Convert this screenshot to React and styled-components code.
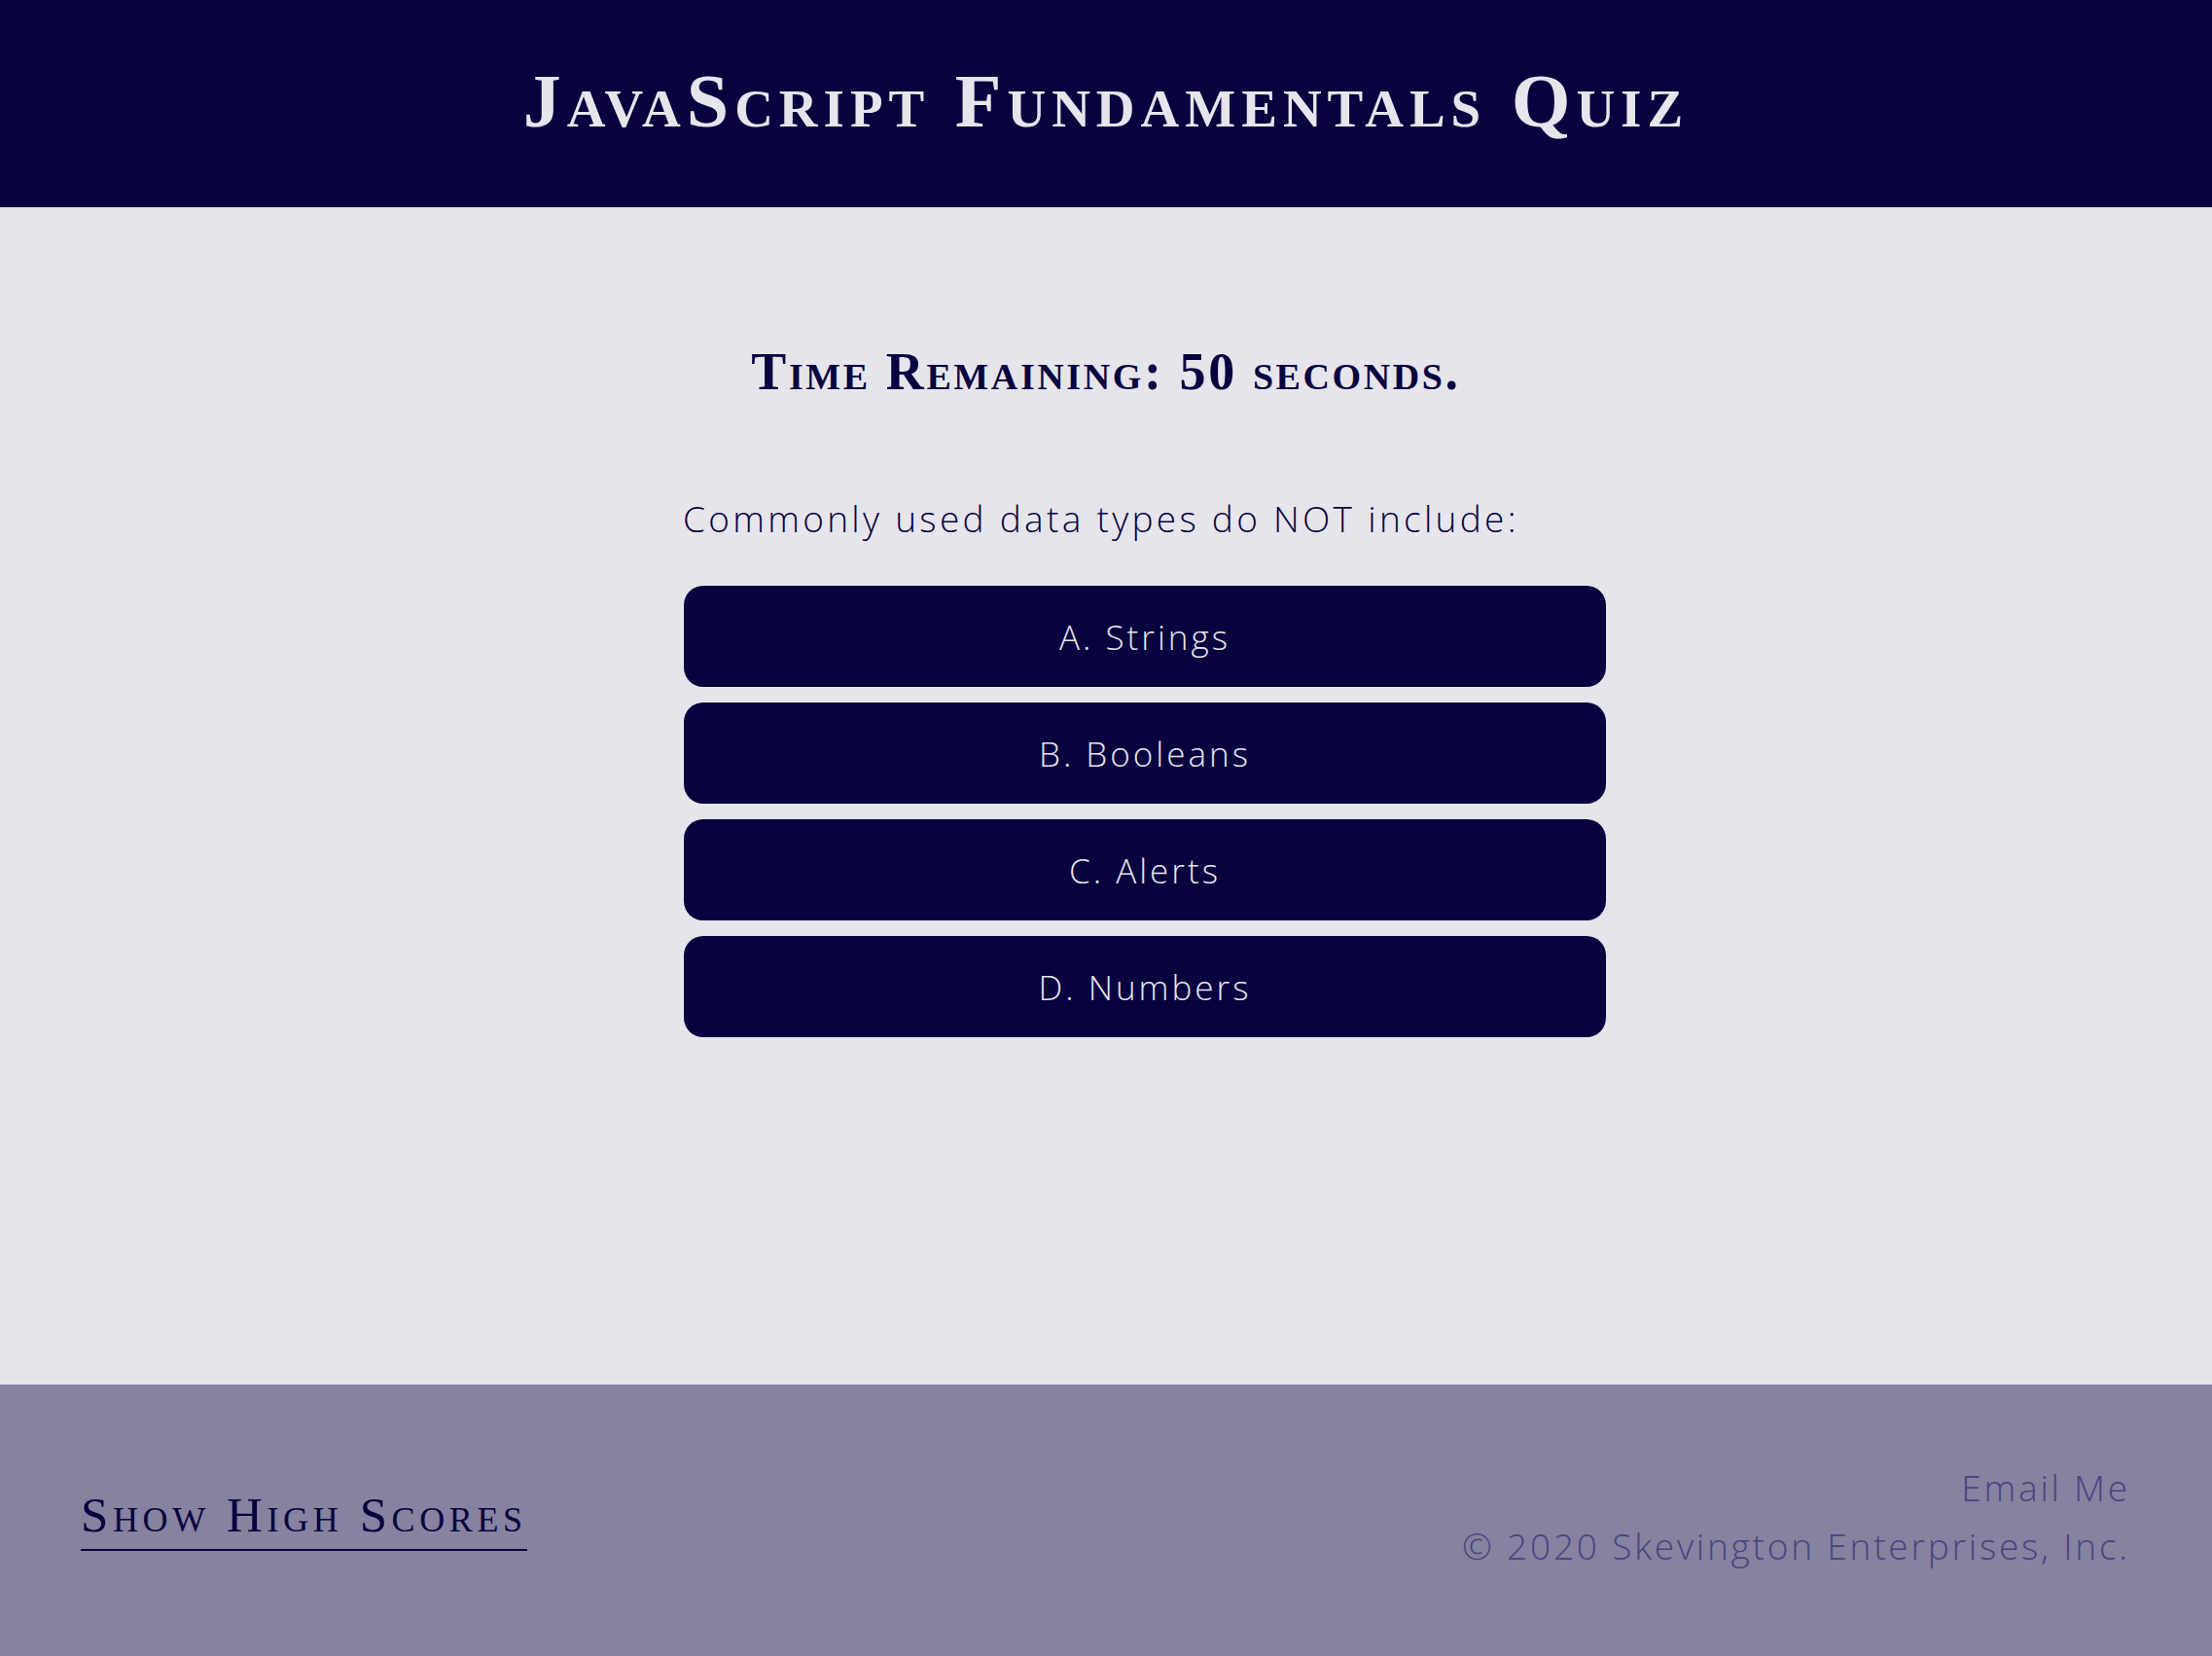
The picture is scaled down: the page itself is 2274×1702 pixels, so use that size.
import React from 'react';
import styled, { createGlobalStyle } from 'styled-components';

const GlobalStyle = createGlobalStyle`
	html, body {
		margin: 0;
		padding: 0;
	}

	body {
		background: #e6e5eb;
		font-family: 'Open Sans', 'Liberation Sans', sans-serif;
	}
`;

const StyledPage = styled.div`
	display: flex;
	flex-direction: column;
	min-height: 100vh;
`;

const StyledHeader = styled.header`
	display: flex;
	align-items: center;
	justify-content: center;
	height: 213px;
	background: #08023f;
`;

const StyledTitle = styled.h1`
	margin: 0 0 6px;
	font-family: 'Liberation Serif', 'DejaVu Serif', serif;
	font-variant: small-caps;
	font-weight: 700;
	font-size: 78px;
	letter-spacing: 6px;
	line-height: 1;
	color: #e6e5eb;
`;

const StyledMain = styled.main`
	flex: 1;
	display: flex;
	flex-direction: column;
	align-items: center;
	padding-top: 142px;
`;

const StyledTimer = styled.h2`
	margin: 0 0 105px;
	font-family: 'Liberation Serif', 'DejaVu Serif', serif;
	font-variant: small-caps;
	font-weight: 700;
	font-size: 54px;
	letter-spacing: 2.6px;
	line-height: 1;
	color: #08023f;
`;

const StyledQuiz = styled.section`
	width: 870px;
`;

const StyledQuestion = styled.p`
	margin: 0 0 51px;
	font-size: 37px;
	font-weight: 300;
	letter-spacing: 3.3px;
	line-height: 1;
	color: #08023f;
`;

const StyledChoices = styled.div`
	display: flex;
	flex-direction: column;
	gap: 16px;
`;

const StyledChoice = styled.button`
	box-sizing: content-box;
	width: 100%;
	height: 104px;
	padding: 0 39px;
	margin-left: 1px;
	border: none;
	border-radius: 20px;
	background: #08023f;
	color: #e6e5eb;
	font-family: 'Open Sans', 'Liberation Sans', sans-serif;
	font-size: 35px;
	font-weight: 300;
	letter-spacing: 3px;
	cursor: pointer;
`;

const StyledFooter = styled.footer`
	display: flex;
	align-items: center;
	justify-content: space-between;
	height: 279px;
	padding: 0 84px 0 83px;
	background: #86829f;
`;

const StyledScoresLink = styled.a`
	display: inline-block;
	padding-bottom: 9px;
	border-bottom: 2px solid #08023f;
	font-family: 'Liberation Serif', 'DejaVu Serif', serif;
	font-variant: small-caps;
	font-size: 51px;
	letter-spacing: 4.6px;
	line-height: 1;
	color: #08023f;
	text-decoration: none;
`;

const StyledContact = styled.div`
	text-align: right;
	font-size: 37px;
	font-weight: 300;
	letter-spacing: 2.8px;
	line-height: 60px;
	color: #4a4580;
	margin-top: -8px;
`;

const choices = ['A. Strings', 'B. Booleans', 'C. Alerts', 'D. Numbers'];

export default function App() {
	return (
		<StyledPage>
			<GlobalStyle />
			<StyledHeader>
				<StyledTitle>JavaScript Fundamentals Quiz</StyledTitle>
			</StyledHeader>
			<StyledMain>
				<StyledTimer>Time Remaining: 50 seconds.</StyledTimer>
				<StyledQuiz>
					<StyledQuestion>Commonly used data types do NOT include:</StyledQuestion>
					<StyledChoices>
						{choices.map((choice, index) => (
							<StyledChoice key={`${index}-choice`}>{choice}</StyledChoice>
						))}
					</StyledChoices>
				</StyledQuiz>
			</StyledMain>
			<StyledFooter>
				<StyledScoresLink href="#">Show High Scores</StyledScoresLink>
				<StyledContact>
					<div>Email Me</div>
					<div>© 2020 Skevington Enterprises, Inc.</div>
				</StyledContact>
			</StyledFooter>
		</StyledPage>
	);
}
